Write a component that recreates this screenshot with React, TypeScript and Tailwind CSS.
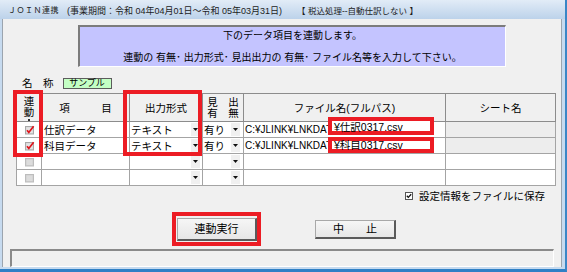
import React from 'react';

type Row = {
  on: boolean | null;
  name: string;
  fmt: string;
  head: string;
  file: string;
  sheetOff: boolean;
};

// the path column is covered by the annotation frames from x=328 on
const rows: Row[] = [
  { on: true, name: '仕訳データ', fmt: 'テキスト', head: '有り', file: 'C:¥JLINK¥LNKDAT', sheetOff: true },
  { on: true, name: '科目データ', fmt: 'テキスト', head: '有り', file: 'C:¥JLINK¥LNKDAT', sheetOff: true },
  { on: null, name: '', fmt: '', head: '', file: '', sheetOff: false },
  { on: null, name: '', fmt: '', head: '', file: '', sheetOff: false },
];

function LinkBox({ on }: { on: boolean | null }) {
  return (
    <svg width="11" height="10" viewBox="0 0 11 10" className="mx-auto block">
      <rect x="1.5" y="1.5" width="8" height="7.5" fill={on ? '#d6d6d6' : '#cfcfcf'} stroke={on ? '#a8a8a8' : '#bdbdbd'} />
      <rect x="2.5" y="2.5" width="6" height="5.5" fill={on ? '#e4e4e4' : '#dcdcdc'} />
      {on && <path d="M3 5.2 L4.8 7.4 L9.6 1.2" stroke="#e0141c" strokeWidth="1.7" fill="none" />}
    </svg>
  );
}

function DropButton() {
  return (
    <span className="flex h-[13px] w-[9px] shrink-0 items-center justify-center bg-[#f0f0f0]">
      <svg width="5" height="3" viewBox="0 0 5 3">
        <path d="M0 0H5L2.5 3Z" fill="#111" />
      </svg>
    </span>
  );
}

const cell = 'border border-[#a4a4a4] p-0';
const head = 'border border-[#8c8c8c] p-0 font-normal';

export default function App() {
  return (
    <div className="relative h-[272px] w-[567px] overflow-hidden border-b-[3px] border-r-2 border-b-[#2f80c6] border-r-[#3a86c6] bg-[#c6daef] text-black [font-family:'Liberation_Sans','Noto_Sans_CJK_JP',sans-serif]">
      {/* title bar */}
      <div className="flex h-[19px] items-center whitespace-pre bg-gradient-to-b from-[#e2ecf7] to-[#bcd2ea] pl-[8px] pt-[3px] leading-[10px] text-[#1c1c1c]">
        <span className="text-[8px] tracking-[0.5px]">ＪＯＩＮ連携</span>
        <span className="ml-[8px] text-[9px]">(事業期間：令和 04年04月01日～令和 05年03月31日)</span>
        <span className="ml-[15px] text-[8.5px]">【 税込処理--自動仕訳しない 】</span>
      </div>

      {/* window body */}
      <div className="ml-[2px] flex h-[248px] w-[560px] flex-col border-x border-[#9ba4ae] bg-[#f0f0f0]">
        <div className="ml-[75px] mt-[6px] flex h-[42px] w-[428px] flex-col items-center border-l-2 border-t-2 border-b border-r border-l-[#7c7c7c] border-t-[#7c7c7c] border-b-white border-r-white bg-[#c4c4ff] pt-[3px] text-[10px] leading-[12px]">
          <span>下のデータ項目を連動します。</span>
          <span className="mt-[10px] whitespace-pre">連動の 有無･ 出力形式･ 見出出力の 有無･ ファイル名等を入力して下さい。</span>
        </div>

        <div className="ml-[19px] mt-[10px] flex h-[12px] items-center">
          <span className="text-[10.5px] leading-[12px]">名　称</span>
          <span className="ml-[9px] flex h-[11px] w-[49px] items-center justify-center border border-[#5c5c5c] bg-[#c4ffc4] text-[9px] leading-[9px]">サンプル</span>
        </div>

        <table className="ml-[13px] mt-[4px] w-[539px] table-fixed border-collapse border border-[#6e6e6e] text-[10.5px] leading-[12px]">
          <colgroup>
            <col className="w-[25px]" />
            <col className="w-[88px]" />
            <col className="w-[73px]" />
            <col className="w-[41px]" />
            <col className="w-[202px]" />
            <col className="w-[110px]" />
          </colgroup>
          <thead>
            <tr className="h-[28px] bg-[#f0f0f0]">
              <th className={`${head} align-top`}>
                <div className="flex h-[27px] flex-col items-center overflow-hidden pt-[2px] leading-[11px]">
                  <span>連</span>
                  <span>動</span>
                  <span className="mt-[1px] h-[2px] w-[2px] bg-[#333]" />
                </div>
              </th>
              <th className={`${head} whitespace-pre`}>項　　　目</th>
              <th className={head}>出力形式</th>
              <th className={head}>
                <div className="flex flex-col items-center whitespace-pre leading-[11px]">
                  <span>見　出</span>
                  <span>有　無</span>
                </div>
              </th>
              <th className={head}>ファイル名(フルパス)</th>
              <th className={head}>シート名</th>
            </tr>
          </thead>
          <tbody>
            {rows.map((r, i) => (
              <tr key={i} className="h-[16px] bg-white">
                <td className={cell}>
                  <LinkBox on={r.on} />
                </td>
                <td className={`${cell} pl-[2px] whitespace-nowrap`}>{r.name}</td>
                <td className={cell}>
                  <div className="flex items-center justify-between pl-[1px] pr-[2px]">
                    <span className="whitespace-nowrap">{r.fmt}</span>
                    <DropButton />
                  </div>
                </td>
                <td className={cell}>
                  <div className="flex items-center justify-between pl-[1px] pr-[3px]">
                    <span className="whitespace-nowrap">{r.head}</span>
                    <DropButton />
                  </div>
                </td>
                <td className={`${cell} overflow-hidden whitespace-nowrap pl-[1px] text-[10px]`}>{r.file}</td>
                <td className={`${cell} ${r.sheetOff ? 'bg-[#ededed]' : 'bg-white'}`} />
              </tr>
            ))}
          </tbody>
        </table>

        <div className="mr-[16px] mt-[4px] flex h-[12px] items-center self-end">
          <svg width="8" height="8" viewBox="0 0 8 8">
            <rect x="0.5" y="0.5" width="7" height="7" fill="#fff" stroke="#555" />
            <path d="M1.8 3.8 L3.3 5.4 L6.2 2.2" stroke="#111" strokeWidth="1.3" fill="none" />
          </svg>
          <span className="ml-[6px] text-[10.5px] leading-[12px]">設定情報をファイルに保存</span>
        </div>

        <div className="ml-[174px] mt-[16px] flex h-[23px] items-center">
          <button className="flex h-[23px] w-[80px] items-center justify-center border border-b-2 border-r-2 border-b-[#5a5a5a] border-l-[#a8a8a8] border-r-[#5a5a5a] border-t-[#a8a8a8] bg-gradient-to-b from-[#f6f6f6] to-[#e6e6e6] text-[11px] leading-[12px]">
            連動実行
          </button>
          <button className="ml-[58px] flex h-[19px] w-[81px] items-center justify-center whitespace-pre border border-b-2 border-r-2 border-b-[#5a5a5a] border-l-[#a8a8a8] border-r-[#5a5a5a] border-t-[#a8a8a8] bg-gradient-to-b from-[#f6f6f6] to-[#e6e6e6] text-[11px] leading-[12px]">
            中　　止
          </button>
        </div>

        <div className="mx-[7px] mt-[8px] h-[18px] border-b border-l-2 border-r border-t-2 border-b-white border-l-[#8a8a8a] border-r-white border-t-[#8a8a8a] bg-[#f0f0f0]" />
      </div>

      {/* annotation frames */}
      <div className="absolute left-[13px] top-[90px] h-[67px] w-[30px] border-4 border-[#ec1c24]" />
      <div className="absolute left-[123px] top-[90px] h-[66px] w-[79px] border-4 border-[#ec1c24]" />
      <div className="absolute left-[328px] top-[117px] flex h-[18px] w-[106px] items-center border-4 border-[#ec1c24] bg-white pl-[2px] text-[10.5px] leading-[10px]">
        <span className="translate-y-[1px] whitespace-nowrap">¥仕訳0317.csv</span>
      </div>
      <div className="absolute left-[328px] top-[137px] flex h-[16px] w-[106px] items-center border-4 border-[#ec1c24] bg-white pl-[2px] text-[10.5px] leading-[10px]">
        <span className="whitespace-nowrap">¥科目0317.csv</span>
      </div>
      <div className="absolute left-[172px] top-[212px] h-[34px] w-[89px] border-4 border-[#ec1c24]" />
    </div>
  );
}
